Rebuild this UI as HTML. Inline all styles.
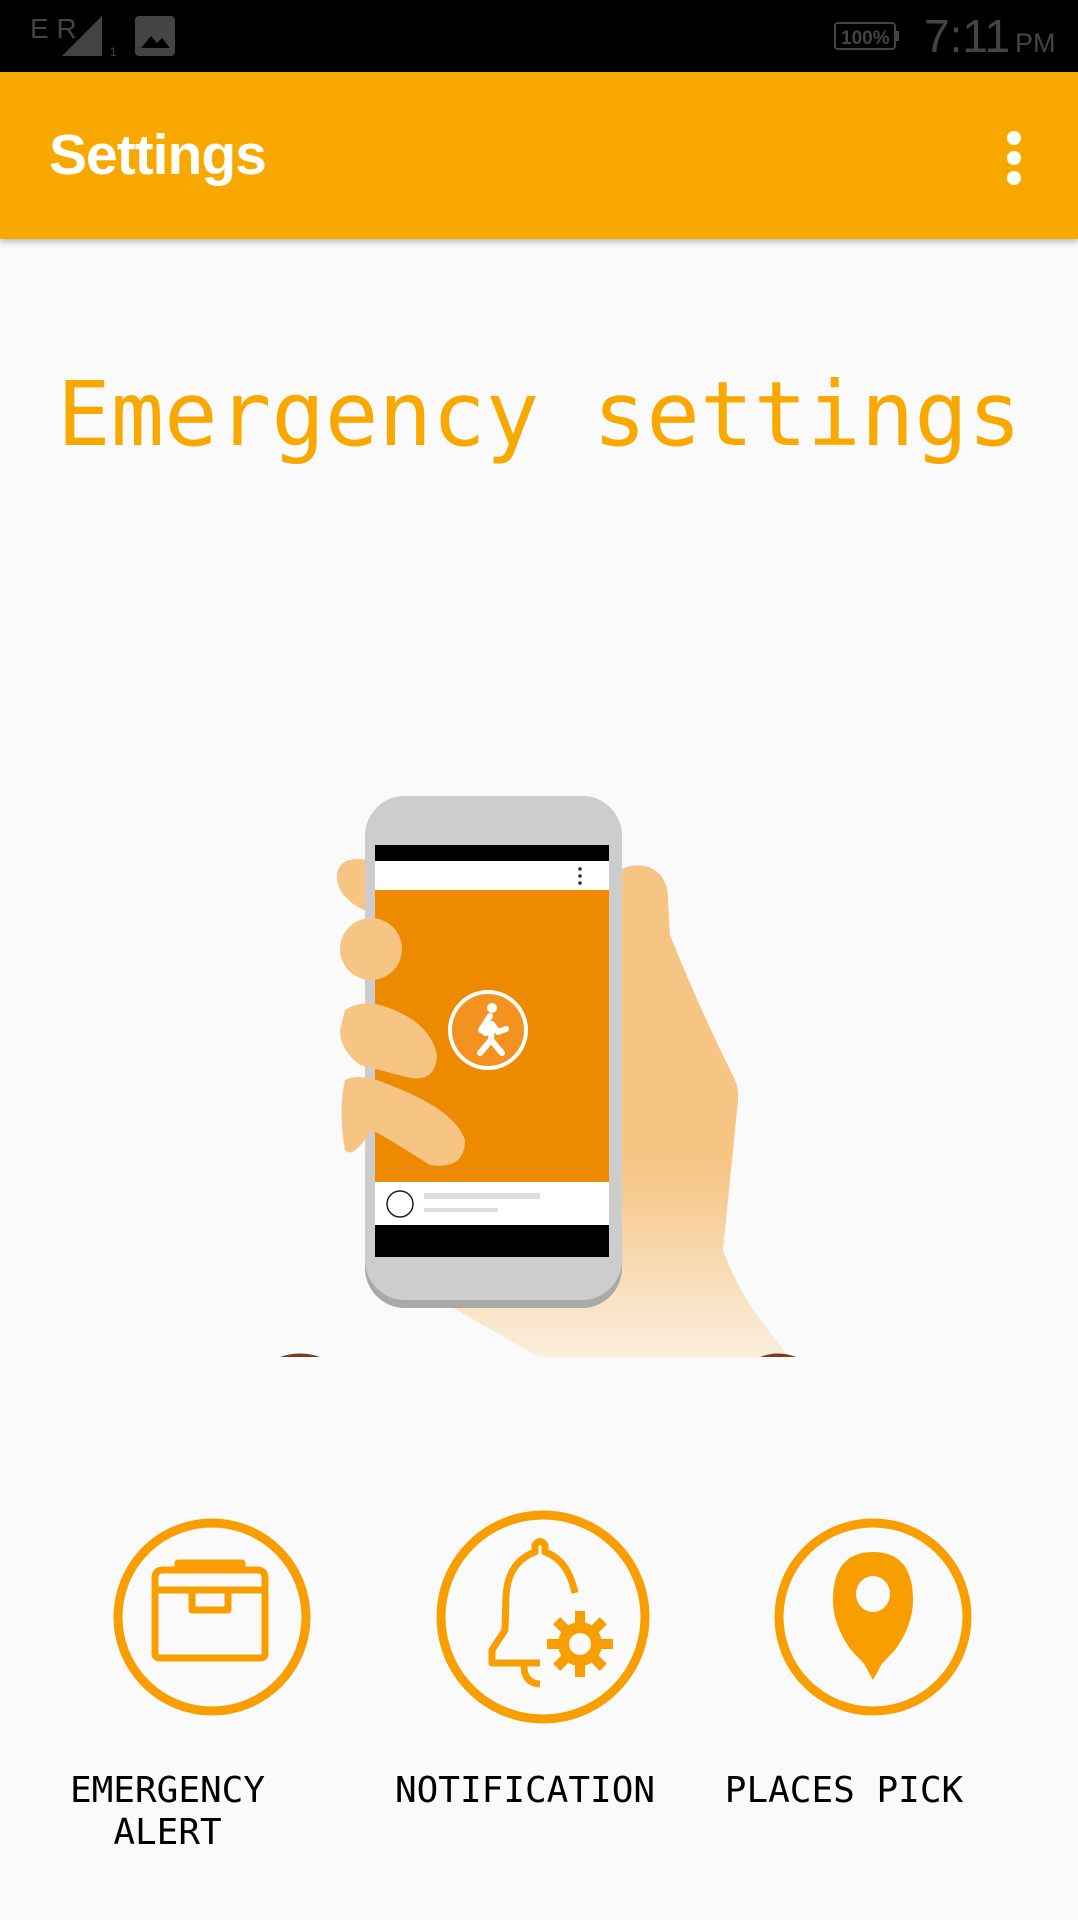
<!DOCTYPE html>
<html><head><meta charset="utf-8"><style>
html,body{margin:0;padding:0}
body{width:1078px;height:1920px;background:#fafafa;position:relative;overflow:hidden;font-family:"Liberation Sans",sans-serif}
.sb{position:absolute;left:0;top:0;width:1078px;height:72px;background:#000}
.ab{position:absolute;left:0;top:72px;width:1078px;height:167px;background:#f9a800;box-shadow:0 3px 6px rgba(0,0,0,.25)}
.ab .t{position:absolute;left:49px;top:50px;font-size:57px;color:#fff;font-weight:bold;letter-spacing:-1px}
.mono{font-family:"DejaVu Sans Mono","Liberation Mono",monospace;position:absolute}
.h{left:57px;top:362px;font-size:89px;color:#f9a800}
.lbl{font-size:36px;color:#000;text-align:center;line-height:42px;top:1770px}
</style></head><body>
<div class="sb">
<svg width="1078" height="72" style="position:absolute;left:0;top:0">
<text x="30" y="38" font-size="28" fill="#444" font-family="Liberation Sans">E R</text>
<polygon points="62,56 102,16 102,56" fill="#444"/>
<text x="110" y="56" font-size="12" fill="#444">1</text>
<rect x="135" y="16" width="40" height="40" rx="4" fill="#444"/>
<polygon points="141,48 151,36 157,43 162,38 170,48" fill="#000"/>
<rect x="835" y="23" width="60" height="26" rx="3" fill="none" stroke="#444" stroke-width="2"/>
<rect x="895" y="31" width="4" height="10" fill="#444"/>
<text x="841" y="44" font-size="19" fill="#444" font-weight="bold">100%</text>
<text x="924" y="52" font-size="46" fill="#444">7:11</text>
<text x="1015" y="52" font-size="27" fill="#444">PM</text>
</svg></div>
<div class="ab"><div class="t">Settings</div>
<svg width="20" height="60" style="position:absolute;left:1004px;top:58px"><circle cx="10" cy="8" r="7" fill="#fff"/><circle cx="10" cy="28" r="7" fill="#fff"/><circle cx="10" cy="48" r="7" fill="#fff"/></svg></div>
<div class="mono h">Emergency settings</div>

<svg width="1078" height="700" style="position:absolute;left:0;top:760px" viewBox="0 760 1078 700">
<defs><linearGradient id="g" x1="0" y1="0" x2="0" y2="1"><stop offset="0.6" stop-color="#f6c483"/><stop offset="1" stop-color="#fbeedd"/></linearGradient></defs>
<path d="M612,882 Q620,862 645,866 Q668,872 668,900 L670,935 Q700,1010 735,1080 Q740,1090 737,1110 L723,1250 Q740,1300 790,1357 L539,1357 L453,1308 Z" fill="url(#g)"/>
<path d="M368,860 Q335,855 337,880 Q340,900 368,912 Z" fill="#f6c483"/>
<rect x="365" y="796" width="257" height="512" rx="40" fill="#a9a9a9"/>
<rect x="365" y="796" width="257" height="504" rx="40" fill="#cdcdcd"/>
<rect x="375" y="845" width="234" height="16" fill="#000"/>
<rect x="375" y="861" width="234" height="29" fill="#fff"/>
<circle cx="580" cy="869" r="1.8" fill="#333"/><circle cx="580" cy="876" r="1.8" fill="#333"/><circle cx="580" cy="883" r="1.8" fill="#333"/>
<rect x="375" y="890" width="234" height="292" fill="#ee8a00"/>
<rect x="375" y="1182" width="234" height="43" fill="#fff"/>
<circle cx="400" cy="1204" r="13" fill="none" stroke="#222" stroke-width="1.5"/>
<rect x="424" y="1193" width="116" height="6" fill="#ddd"/><rect x="424" y="1208" width="74" height="4" fill="#ddd"/>
<rect x="375" y="1225" width="234" height="32" fill="#000"/>
<circle cx="488" cy="1030" r="38" fill="#f39220" stroke="#fff" stroke-width="4"/>
<circle cx="492" cy="1008" r="5" fill="#fff"/>
<path d="M490,1016 L481,1030 L486,1033 L492,1024 L491,1040 L480,1053 M491,1040 L502,1053 M492,1024 L498,1032 L506,1029" stroke="#fff" stroke-width="6" fill="none" stroke-linecap="round" stroke-linejoin="round"/>
<circle cx="371" cy="949" r="31" fill="#f6c483"/>
<path d="M345,1010 Q360,1000 380,1005 Q430,1020 437,1055 Q436,1082 410,1078 Q380,1070 360,1065 Q340,1050 340,1030 Z" fill="#f6c483"/>
<path d="M345,1080 Q360,1072 390,1085 Q455,1110 465,1140 Q465,1170 430,1165 L390,1140 L372,1130 Q352,1160 345,1150 Q338,1110 345,1080 Z" fill="#f6c483"/>
<path d="M280,1357 Q300,1350 320,1357 Z M760,1357 Q778,1350 796,1357 Z" fill="#7a3b1a"/>
</svg>

<svg width="1078" height="240" style="position:absolute;left:0;top:1500px" viewBox="0 1500 1078 240">
<g fill="none" stroke="#f99e00" stroke-width="9">
<circle cx="212" cy="1617" r="94"/>
<circle cx="543" cy="1617" r="102"/>
<circle cx="873" cy="1617" r="94"/>
</g>
<g fill="none" stroke="#f99e00" stroke-width="7" stroke-linejoin="round">
<rect x="155" y="1590" width="110" height="68" rx="4"/>
<path d="M155,1592 L155,1578 Q155,1570 163,1570 L257,1570 Q265,1570 265,1578 L265,1592"/>
<path d="M178,1569 L178,1563 L242,1563 L242,1569"/>
<path d="M192,1592 L192,1610 L228,1610 L228,1592"/>
<path d="M575,1593 Q568,1560 545,1552 L545,1545 Q540,1538 535,1545 L535,1552 Q508,1562 506,1596 L505,1630 L492,1650 L492,1663 L540,1663 M524,1663 Q523,1683 540,1684"/>
</g>
<g fill="#f99e00">
<circle cx="580" cy="1644" r="22"/>
<rect x="575" y="1611" width="10" height="66"/><rect x="547" y="1639" width="66" height="10"/>
<rect x="575" y="1611" width="10" height="66" transform="rotate(45 580 1644)"/><rect x="575" y="1611" width="10" height="66" transform="rotate(-45 580 1644)"/>
<path d="M873,1552 Q913,1552 913,1600 Q913,1625 895,1650 L873,1673 L851,1650 Q833,1625 833,1600 Q833,1552 873,1552 Z"/>
<polygon points="851,1640 895,1640 873,1680"/>
</g>
<circle cx="580" cy="1644" r="11" fill="#fafafa"/>
<ellipse cx="873" cy="1594" rx="17" ry="18" fill="#fafafa"/>
</svg>
<div class="mono lbl" style="left:40px;width:255px">EMERGENCY<br>ALERT</div>
<div class="mono lbl" style="left:392px;width:266px">NOTIFICATION</div>
<div class="mono lbl" style="left:722px;width:244px">PLACES PICK</div>
</body></html>
